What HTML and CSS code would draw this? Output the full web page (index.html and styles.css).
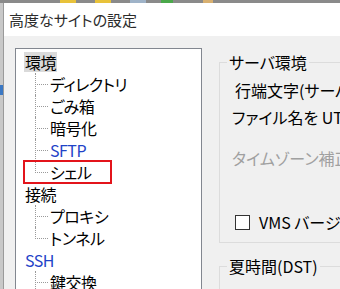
FILE: index.html
```html
<!DOCTYPE html>
<html lang="ja">
<head>
<meta charset="utf-8">
<link rel="stylesheet" href="styles.css">
</head>
<body>
<div class="screen">
  <div class="topstrip">
    <span class="blk b1"></span><span class="blk b2"></span><span class="blk b3"></span><span class="blk b4"></span><span class="blk b5"></span>
  </div>
  <div class="main">
    <div class="leftstrip"><span class="tab"></span></div>
    <div class="window">
      <div class="titlebar">高度なサイトの設定</div>
      <div class="body">
        <div class="tree">
          <ul class="root">
            <li><span class="label sel">環境</span>
              <ul class="kids">
                <li><span class="label">ディレクトリ</span></li>
                <li><span class="label">ごみ箱</span></li>
                <li><span class="label">暗号化</span></li>
                <li><span class="label blue">SFTP</span></li>
                <li class="last"><span class="label">シェル</span></li>
              </ul>
            </li>
            <li><span class="label">接続</span>
              <ul class="kids">
                <li><span class="label">プロキシ</span></li>
                <li class="last"><span class="label">トンネル</span></li>
              </ul>
            </li>
            <li><span class="label blue">SSH</span>
              <ul class="kids">
                <li><span class="label">鍵交換</span></li>
                <li><span class="label">認証</span></li>
              </ul>
            </li>
          </ul>
          <div class="mark"></div>
        </div>
        <div class="panel">
          <fieldset class="group g1">
            <legend>サーバ環境</legend>
            <div class="row r1">行端文字(サーバ側)(E):</div>
            <div class="row r2">ファイル名を UTF-8 でエンコード(U):</div>
            <div class="row r3 dis">タイムゾーン補正(時間)(O):</div>
            <div class="row r4"><span class="check"></span><span>VMS バージョン番号を削除(V)</span></div>
          </fieldset>
          <fieldset class="group g2">
            <legend>夏時間(DST)</legend>
            <div class="row r5"><span class="radio"></span><span>リモートタイムゾーンに合わせて調整</span></div>
          </fieldset>
        </div>
      </div>
    </div>
  </div>
</div>
</body>
</html>
```
FILE: styles.css
```css
html, body {
  margin: 0;
  padding: 0;
}
body {
  font-family: "Noto Sans CJK JP", "Noto Sans", sans-serif;
  font-feature-settings: "palt";
  color: #000;
}
.screen {
  width: 340px;
  height: 289px;
  overflow: hidden;
  display: flex;
  flex-direction: column;
  background: #c4c4c4;
}
.topstrip {
  height: 3px;
  flex: none;
  display: flex;
  background: #8a8a8a;
}
.blk { height: 3px; display: block; }
.b1 { width: 16px; margin-left: 60px; background: #e8c23a; }
.b2 { width: 16px; margin-left: 19px; background: #e8c23a; }
.b3 { width: 16px; margin-left: 19px; background: #9fb3c8; }
.b4 { width: 12px; margin-left: 15px; background: #4aa84a; }
.b5 { width: 10px; margin-left: 30px; background: #d8b070; }
.main {
  flex: 1;
  display: flex;
  min-height: 0;
}
.leftstrip {
  width: 3px;
  flex: none;
  background: #c8c8c8;
  display: flex;
  flex-direction: column;
}
.tab {
  display: block;
  margin-top: 82px;
  height: 10px;
  background: #3b78c4;
}
.window {
  flex: none;
  width: 400px;
  border-left: 1px solid #9a9a9a;
  display: flex;
  flex-direction: column;
  background: #f0f0f0;
}
.titlebar {
  height: 33px;
  flex: none;
  background: #fff;
  font-size: 15px;
  line-height: 33px;
  padding-left: 5px;
  color: #2b2b2b;
  white-space: nowrap;
}
.body {
  flex: 1;
  display: flex;
  padding: 12px 0 0 11px;
  white-space: nowrap;
}
.tree {
  position: relative;
  width: 185px;
  flex: none;
  background: #fff;
  border: 1px solid #828790;
  border-bottom: none;
  padding-top: 2px;
  font-size: 16px;
  letter-spacing: -0.5px;
}
.tree ul {
  list-style: none;
  margin: 0;
  padding: 0;
}
.root > li > .label {
  margin-left: 8px;
}
.label {
  display: inline-block;
  height: 22px;
  line-height: 22px;
  padding: 0 1px;
}
.root > li {
  line-height: 22px;
}
.sel {
  background: #dadada;
  height: 20px;
  line-height: 20px;
  margin-top: 1px;
  margin-bottom: 1px;
}
.blue { color: #1f43c8; }
.kids {
  margin-left: 19px !important;
}
.kids > li {
  position: relative;
  padding-left: 14px;
  height: 22px;
}
.kids > li::before {
  content: "";
  position: absolute;
  left: 0;
  top: 0;
  width: 12px;
  height: 11px;
  border-left: 1px dotted #9a9a9a;
  border-bottom: 1px dotted #9a9a9a;
}
.kids > li::after {
  content: "";
  position: absolute;
  left: 0;
  top: 11px;
  height: 11px;
  border-left: 1px dotted #9a9a9a;
}
.kids > li.last::after { display: none; }
.mark {
  position: absolute;
  left: 7px;
  top: 111px;
  width: 85px;
  height: 20px;
  border: 2px solid #e3141b;
}
.panel {
  margin-left: 17px;
  padding-top: 3px;
  width: 200px;
  flex: none;
  font-size: 16px;
}
.group {
  margin: 0;
  border: 1px solid #dcdcdc;
  padding: 0 0 0 7px;
  min-width: 0;
}
.group legend {
  padding: 0 2px;
  line-height: 22px;
  height: 22px;
}
.row {
  height: 22px;
  line-height: 22px;
  padding-left: 6px;
  display: flex;
  align-items: center;
}
.r1 { margin-top: 6px; padding-left: 8px; }
.r2 { margin-top: 5px; padding-left: 5px; }
.r3 { margin-top: 19px; padding-left: 5px; }
.r4 { margin-top: 42px; margin-bottom: 9px; padding-left: 8px; }
.dis { color: #a0a0a0; }
.g2 { margin-top: 12px; }
.r5 { margin-top: 8px; padding-left: 8px; }
.check {
  width: 13px;
  height: 13px;
  border: 1px solid #333;
  background: #fff;
  margin-right: 9px;
  flex: none;
}
.radio {
  width: 13px;
  height: 13px;
  border: 1px solid #333;
  border-radius: 50%;
  background: #fff;
  margin-right: 9px;
  flex: none;
}
```
